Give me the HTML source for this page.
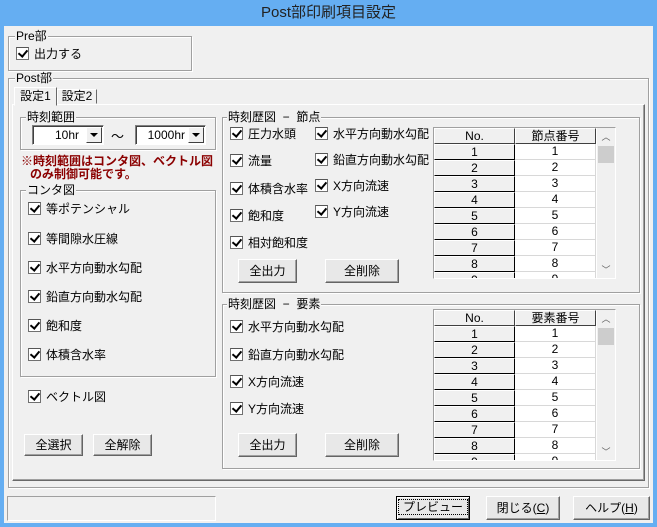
<!DOCTYPE html><html><head><meta charset="utf-8"><style>
*{box-sizing:border-box}
body{margin:0;width:657px;height:527px;overflow:hidden;background:#65aef2;font-family:"Liberation Sans","Noto Sans CJK JP",sans-serif;font-size:12px;color:#000}
.a{position:absolute}
#win{position:absolute;left:4px;top:26px;width:649px;height:497px;background:#f0f0f0}
.t{position:absolute;left:0;top:0;width:657px;height:26px;text-align:center;line-height:26px;font-size:15px;color:#222}
.g{position:absolute;border:1px solid #a0a0a0;box-shadow:inset 1px 1px 0 #fff,1px 1px 0 #fff}
.gl{position:absolute;background:#f0f0f0;line-height:13px;padding:0 1px;white-space:nowrap}
.cb{position:absolute;white-space:nowrap;line-height:14px}
.cb i{display:inline-block;width:13px;height:13px;border:1px solid #707070;border-top-color:#555;background:#fff;vertical-align:-2px;margin-right:5px;position:relative}
.cb i:after{content:"";position:absolute;left:3px;top:0px;width:4px;height:7px;border:solid #000;border-width:0 2px 2px 0;transform:rotate(40deg)}
.btn{position:absolute;background:#e8e8e8;border:1px solid;border-color:#fff #646464 #646464 #fff;box-shadow:inset -1px -1px 0 #a0a0a0;text-align:center;font-size:12px}
.tbl{position:absolute;background:#fff;border:1px solid;border-color:#a0a0a0 #fff #fff #a0a0a0;overflow:hidden}
.row{position:absolute;left:0;height:16px;width:162px;font-size:12px;line-height:15px}
.row .n{position:absolute;left:0;width:81px;height:16px;background:#f0f0f0;border:1px solid;border-color:#fff #000 #000 #fff;text-align:center}
.row .v{position:absolute;left:81px;width:81px;height:16px;border-bottom:1px solid #d8d8d8;border-right:1px solid #d8d8d8;text-align:center}
.sb{position:absolute;right:0;top:0;width:18px;height:100%;background:#f0f0f0;font-size:9px;color:#606060;text-align:center}
.combo{position:absolute;height:20px;background:#fff;border:1px solid;border-color:#808080 #fff #fff #808080;box-shadow:inset 1px 1px 0 #404040;text-align:right;line-height:18px}
.combo b{position:absolute;right:1px;top:1px;width:16px;height:16px;background:#f0f0f0;border:1px solid;border-color:#fff #404040 #404040 #fff}
.combo b:after{content:"";position:absolute;left:3px;top:5px;border:4px solid transparent;border-top:4px solid #000;border-width:4px 4px 0 4px}
</style></head><body>
<div class="t">Post部印刷項目設定</div>
<div id="win"></div>

<div class="g" style="left:8px;top:36px;width:184px;height:35px"></div>
<div class="gl" style="left:15px;top:30px">Pre部</div>
<div class="cb" style="left:16px;top:47px"><i></i>出力する</div>

<div class="g" style="left:8px;top:78px;width:641px;height:410px"></div>
<div class="gl" style="left:15px;top:72px">Post部</div>
<div class="a" style="left:12px;top:104px;width:633px;height:377px;border:1px solid;border-color:#fff #696969 #696969 #fff;box-shadow:inset -1px -1px 0 #a0a0a0"></div>
<div class="a" style="left:14px;top:87px;width:43px;height:19px;background:#f0f0f0;border:1px solid;border-color:#fff #696969 transparent #fff;text-align:center;line-height:16px">設定1</div>
<div class="a" style="left:57px;top:89px;width:40px;height:15px;border:1px solid;border-color:#fff #696969 transparent #fff;text-align:center;line-height:13px">設定2</div>

<div class="g" style="left:20px;top:117px;width:196px;height:33px"></div>
<div class="gl" style="left:26px;top:111px">時刻範囲</div>
<div class="combo" style="left:32px;top:125px;width:72px;padding-right:24px">10hr<b></b></div>
<div class="a" style="left:111px;top:126px;font-size:13px">～</div>
<div class="combo" style="left:135px;top:125px;width:71px;padding-right:20px">1000hr<b></b></div>
<div class="a" style="left:21px;top:155px;color:#8b0000;font-weight:bold;line-height:13px;white-space:nowrap">※時刻範囲はコンタ図、ベクトル図<br><span style="padding-left:9px">のみ制御可能です。</span></div>

<div class="g" style="left:20px;top:190px;width:196px;height:187px"></div>
<div class="gl" style="left:26px;top:184px">コンタ図</div>
<div class="cb" style="left:28px;top:202px"><i></i>等ポテンシャル</div>
<div class="cb" style="left:28px;top:232px"><i></i>等間隙水圧線</div>
<div class="cb" style="left:28px;top:261px"><i></i>水平方向動水勾配</div>
<div class="cb" style="left:28px;top:290px"><i></i>鉛直方向動水勾配</div>
<div class="cb" style="left:28px;top:319px"><i></i>飽和度</div>
<div class="cb" style="left:28px;top:348px"><i></i>体積含水率</div>
<div class="cb" style="left:28px;top:390px"><i></i>ベクトル図</div>
<div class="btn" style="left:24px;top:434px;width:59px;height:22px;line-height:20px">全選択</div>
<div class="btn" style="left:93px;top:434px;width:59px;height:22px;line-height:20px">全解除</div>

<div class="g" style="left:222px;top:117px;width:418px;height:176px"></div>
<div class="gl" style="left:227px;top:111px">時刻歴図 &nbsp;−&nbsp; 節点</div>
<div class="cb" style="left:230px;top:127px"><i></i>圧力水頭</div>
<div class="cb" style="left:230px;top:154px"><i></i>流量</div>
<div class="cb" style="left:230px;top:182px"><i></i>体積含水率</div>
<div class="cb" style="left:230px;top:209px"><i></i>飽和度</div>
<div class="cb" style="left:230px;top:236px"><i></i>相対飽和度</div>
<div class="cb" style="left:315px;top:127px"><i></i>水平方向動水勾配</div>
<div class="cb" style="left:315px;top:153px"><i></i>鉛直方向動水勾配</div>
<div class="cb" style="left:315px;top:179px"><i></i>X方向流速</div>
<div class="cb" style="left:315px;top:205px"><i></i>Y方向流速</div>
<div class="btn" style="left:238px;top:259px;width:59px;height:24px;line-height:22px">全出力</div>
<div class="btn" style="left:325px;top:259px;width:74px;height:24px;line-height:22px">全削除</div>
<div class="tbl" style="left:433px;top:127px;width:183px;height:152px">
 <div class="row" style="top:0"><div class="n" style="border-color:#fff #404040 #404040 #fff">No.</div><div class="n" style="left:81px;border-color:#fff #404040 #404040 #fff">節点番号</div></div>
 <div class="row" style="top:16px"><div class="n">1</div><div class="v">1</div></div>
 <div class="row" style="top:32px"><div class="n">2</div><div class="v">2</div></div>
 <div class="row" style="top:48px"><div class="n">3</div><div class="v">3</div></div>
 <div class="row" style="top:64px"><div class="n">4</div><div class="v">4</div></div>
 <div class="row" style="top:80px"><div class="n">5</div><div class="v">5</div></div>
 <div class="row" style="top:96px"><div class="n">6</div><div class="v">6</div></div>
 <div class="row" style="top:112px"><div class="n">7</div><div class="v">7</div></div>
 <div class="row" style="top:128px"><div class="n">8</div><div class="v">8</div></div>
 <div class="row" style="top:144px"><div class="n">9</div><div class="v">9</div></div>
 <div class="sb"><div style="margin-top:2px">︿</div><div style="position:absolute;left:1px;top:18px;width:16px;height:17px;background:#cdcdcd"></div><div style="position:absolute;bottom:2px;width:18px">﹀</div></div>
</div>

<div class="g" style="left:222px;top:304px;width:418px;height:165px"></div>
<div class="gl" style="left:227px;top:298px">時刻歴図 &nbsp;−&nbsp; 要素</div>
<div class="cb" style="left:230px;top:320px"><i></i>水平方向動水勾配</div>
<div class="cb" style="left:230px;top:348px"><i></i>鉛直方向動水勾配</div>
<div class="cb" style="left:230px;top:375px"><i></i>X方向流速</div>
<div class="cb" style="left:230px;top:402px"><i></i>Y方向流速</div>
<div class="btn" style="left:238px;top:433px;width:59px;height:24px;line-height:22px">全出力</div>
<div class="btn" style="left:325px;top:433px;width:74px;height:24px;line-height:22px">全削除</div>
<div class="tbl" style="left:433px;top:309px;width:183px;height:152px">
 <div class="row" style="top:0"><div class="n" style="border-color:#fff #404040 #404040 #fff">No.</div><div class="n" style="left:81px;border-color:#fff #404040 #404040 #fff">要素番号</div></div>
 <div class="row" style="top:16px"><div class="n">1</div><div class="v">1</div></div>
 <div class="row" style="top:32px"><div class="n">2</div><div class="v">2</div></div>
 <div class="row" style="top:48px"><div class="n">3</div><div class="v">3</div></div>
 <div class="row" style="top:64px"><div class="n">4</div><div class="v">4</div></div>
 <div class="row" style="top:80px"><div class="n">5</div><div class="v">5</div></div>
 <div class="row" style="top:96px"><div class="n">6</div><div class="v">6</div></div>
 <div class="row" style="top:112px"><div class="n">7</div><div class="v">7</div></div>
 <div class="row" style="top:128px"><div class="n">8</div><div class="v">8</div></div>
 <div class="row" style="top:144px"><div class="n">9</div><div class="v">9</div></div>
 <div class="sb"><div style="margin-top:2px">︿</div><div style="position:absolute;left:1px;top:18px;width:16px;height:17px;background:#cdcdcd"></div><div style="position:absolute;bottom:2px;width:18px">﹀</div></div>
</div>

<div class="a" style="left:7px;top:496px;width:209px;height:25px;border:1px solid;border-color:#a0a0a0 #fff #fff #a0a0a0"></div>
<div class="btn" style="left:396px;top:496px;width:74px;height:24px;line-height:20px;border:1px solid #000;box-shadow:inset 1px 1px 0 #fff,inset -1px -1px 0 #646464"><span style="outline:1px dotted #000;padding:0 4px">プレビュー</span></div>
<div class="btn" style="left:486px;top:496px;width:74px;height:24px;line-height:22px">閉じる(<u>C</u>)</div>
<div class="btn" style="left:573px;top:496px;width:77px;height:24px;line-height:22px">ヘルプ(<u>H</u>)</div>
</body></html>
